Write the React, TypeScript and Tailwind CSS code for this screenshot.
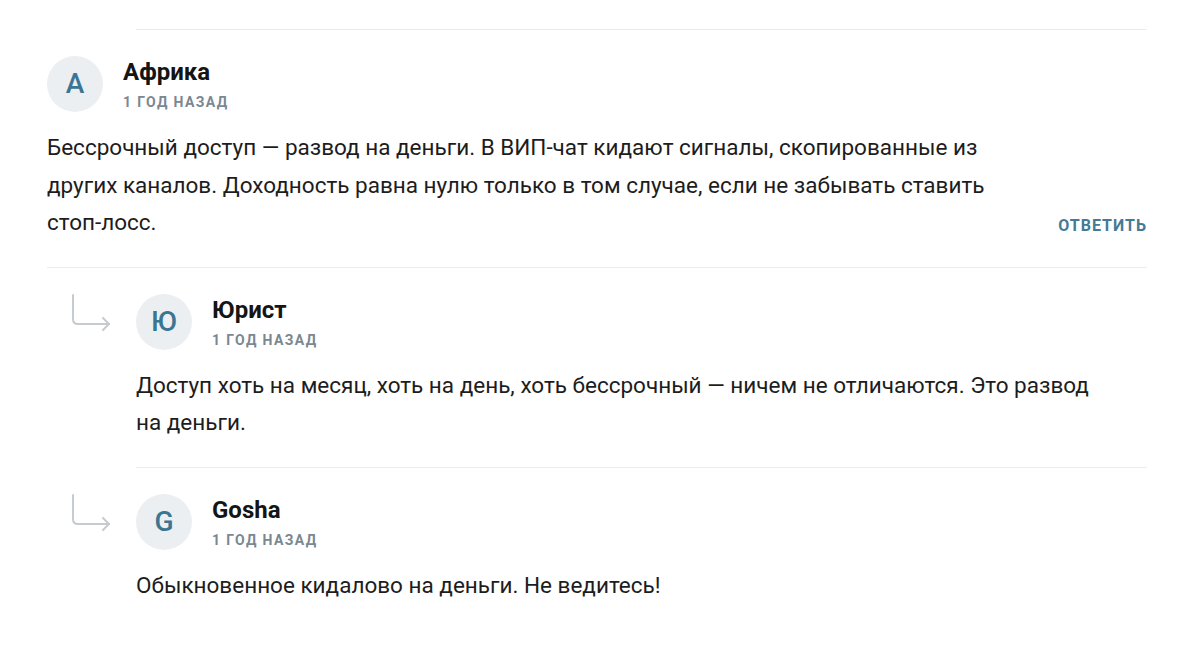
import React from "react";

type Comment = {
  letter: string;
  name: string;
  date: string;
  text: string;
  reply?: boolean;
  answer?: boolean;
};

const comments: Comment[] = [
  {
    letter: "A",
    name: "Африка",
    date: "1 год назад",
    text:
      "Бессрочный доступ — развод на деньги. В ВИП-чат кидают сигналы, скопированные из других каналов. Доходность равна нулю только в том случае, если не забывать ставить стоп-лосс.",
    answer: true,
  },
  {
    letter: "Ю",
    name: "Юрист",
    date: "1 год назад",
    text:
      "Доступ хоть на месяц, хоть на день, хоть бессрочный — ничем не отличаются. Это развод на деньги.",
    reply: true,
  },
  {
    letter: "G",
    name: "Gosha",
    date: "1 год назад",
    text: "Обыкновенное кидалово на деньги. Не ведитесь!",
    reply: true,
  },
];

function ReplyArrow() {
  return (
    <svg width="42" height="40" viewBox="0 0 42 40" fill="none" className="shrink-0">
      <path
        d="M3 1 V25 Q3 30 8 30 H39"
        stroke="#c5cbd0"
        strokeWidth="2"
        strokeLinecap="round"
        strokeLinejoin="round"
      />
      <path
        d="M33 24 L39 30 L33 36"
        stroke="#c5cbd0"
        strokeWidth="2"
        strokeLinecap="round"
        strokeLinejoin="round"
      />
    </svg>
  );
}

function CommentItem({ c, last }: { c: Comment; last: boolean }) {
  return (
    <div className={c.reply ? "flex" : ""}>
      {c.reply && (
        <div className="w-[89px] shrink-0 pt-[26px] pl-[23px]">
          <ReplyArrow />
        </div>
      )}
      <div
        className={
          "flex-1 pt-[26px] pb-[25px] " + (last ? "" : "border-b border-[#ececec]")
        }
      >
        <div className="flex items-center">
          <div className="w-14 h-14 rounded-full bg-[#ebeff2] flex items-center justify-center text-[28px] font-medium text-[#3a7592] shrink-0">
            {c.letter}
          </div>
          <div className="ml-5 flex flex-col">
            <div className="text-[24px] font-bold text-[#151515] leading-[30px]">{c.name}</div>
            <div className="mt-[6px] text-[14px] font-bold uppercase tracking-[1.4px] text-[#7b8791] leading-[18px]">
              {c.date}
            </div>
          </div>
        </div>
        <div className="mt-[17px] flex items-end justify-between">
          <p className="max-w-[970px] text-[22.5px] leading-[37.5px] text-[#1d1d1d]">{c.text}</p>
          {c.answer && (
            <button className="mb-[7px] text-[16px] font-bold uppercase tracking-[1px] text-[#457a95] leading-[18px]">
              Ответить
            </button>
          )}
        </div>
      </div>
    </div>
  );
}

export default function App() {
  return (
    <div
      className="min-h-[652px] bg-white"
      style={{ fontFamily: "Roboto, 'Noto Sans', sans-serif" }}
    >
      <div className="pl-[47px] w-[1147px]">
        <div className="pt-[29px]">
          <div className="ml-[89px] border-t border-[#ececec]" />
        </div>
        {comments.map((c, i) => (
          <CommentItem key={i} c={c} last={i === comments.length - 1} />
        ))}
      </div>
    </div>
  );
}
